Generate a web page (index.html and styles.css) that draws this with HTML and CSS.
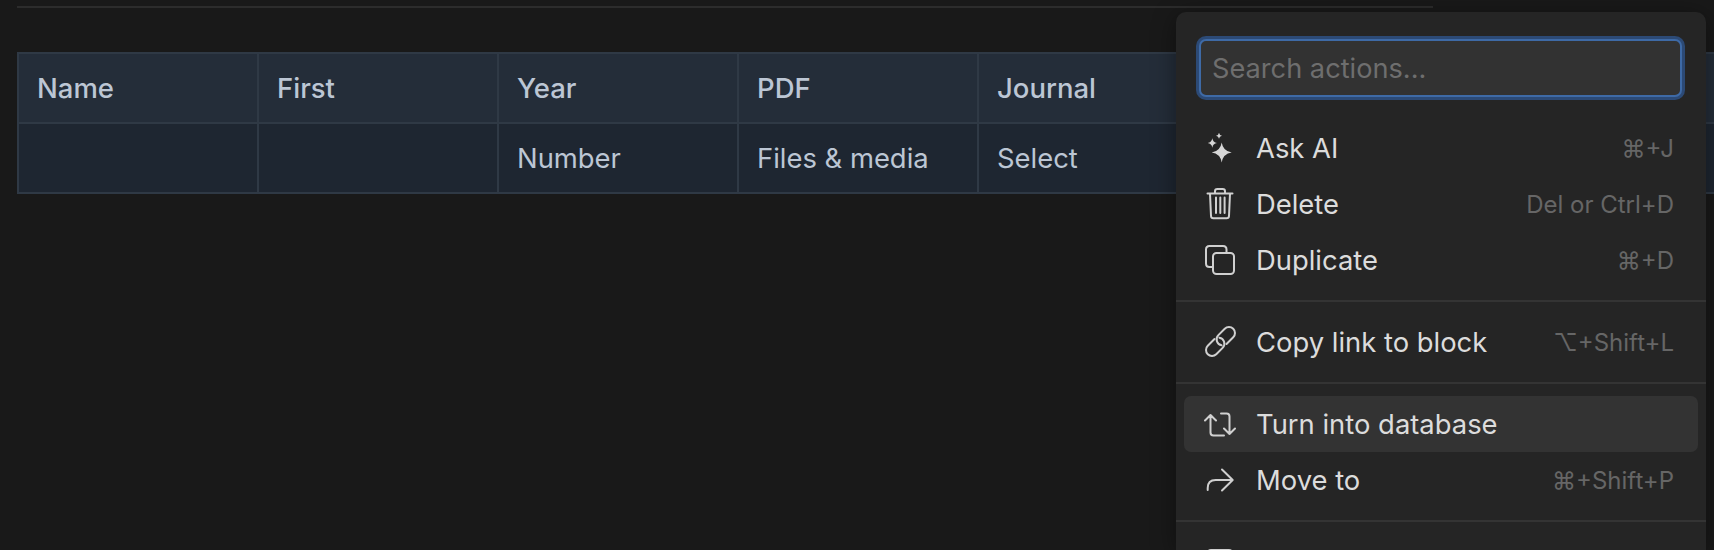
FILE: index.html
```html
<!DOCTYPE html>
<html lang="en">
<head>
<meta charset="utf-8">
<title>Table with block menu</title>
<link rel="stylesheet" href="styles.css">
</head>
<body>
<main class="page">
  <div class="rule"></div>
  <table class="db">
    <tr class="head"><th>Name</th><th>First</th><th>Year</th><th>PDF</th><th>Journal</th><th></th><th></th><th class="edge"></th></tr>
    <tr><td></td><td></td><td>Number</td><td>Files &amp; media</td><td>Select</td><td></td><td></td><td class="edge"></td></tr>
  </table>
</main>
<aside class="menu">
  <div class="search"><input class="search-input" placeholder="Search actions..."></div>
  <div class="group">
    <div class="item">
      <svg class="ico" viewBox="0 0 32 32"><path class="fill" d="M17.700 10.400Q19 19.100 27.700 20.400 19 21.700 17.700 30.400 16.400 21.700 7.700 20.400 16.400 19.100 17.700 10.400ZM8.300 6.300Q8.900 10.400 13 11 8.900 11.600 8.300 15.700 7.700 11.600 3.600 11 7.700 10.400 8.300 6.300ZM15 .7Q15.400 3.300 18 3.700 15.400 4.100 15 6.700 14.600 4.100 12 3.700 14.600 3.300 15 .7Z"/></svg>
      <span class="label">Ask AI</span><span class="keys">⌘+J</span>
    </div>
    <div class="item">
      <svg class="ico" viewBox="0 0 32 32"><path d="M3.500 5.500h25M11 5.500V3.300C11 1.800 12 1 13.400 1h5.200C20 1 21 1.800 21 3.300v2.200M6 5.500l1 22.500c.1 1.500 1 2.300 2.400 2.300h13.200c1.400 0 2.300-.8 2.400-2.300l1-22.500M12 9.500v15.500M16.300 9.500v15.500M20.600 9.500v15.500"/></svg>
      <span class="label">Delete</span><span class="keys">Del or Ctrl+D</span>
    </div>
    <div class="item">
      <svg class="ico" viewBox="0 0 32 32"><path d="M8 23H5.500C3 23 2 22 2 19.500v-14C2 3 3 2 5.500 2h13.500c2.500 0 3.500 1 3.500 3.500V9"/><rect x="9" y="9" width="21" height="21" rx="3.500"/></svg>
      <span class="label">Duplicate</span><span class="keys">⌘+D</span>
    </div>
  </div>
  <div class="group">
    <div class="item">
      <svg class="ico" viewBox="0 0 32 32"><g transform="translate(16.500 15.500) rotate(-45)"><path d="M2.500 6H12a6 6 0 0 0 0-12H3A6 6 0 0 0-1.910 3.440"/><path d="M-2.500-6H-12a6 6 0 0 0 0 12H-3A6 6 0 0 0 1.910-3.440"/></g></svg>
      <span class="label">Copy link to block</span><span class="keys">⌥+Shift+L</span>
    </div>
  </div>
  <div class="group">
    <div class="item active">
      <svg class="ico" viewBox="0 0 32 32"><path d="M1 12.500 6.500 7l5.500 5.500M6.500 7v17.500c0 2 1 3 3 3H20M31 20.500 25.500 26 20 20.500M25.500 26V8.500c0-2-1-3-3-3H17"/></svg>
      <span class="label">Turn into database</span>
    </div>
    <div class="item">
      <svg class="ico" viewBox="0 0 32 32"><path d="M3.700 26v-2c0-5 3-8 8-8H28.500M18 5.500 28.700 16 18 26.500"/></svg>
      <span class="label">Move to</span><span class="keys">⌘+Shift+P</span>
    </div>
  </div>
  <div class="group">
    <div class="item">
      <svg class="ico" viewBox="0 0 32 32"><rect x="3" y="4" width="26" height="24" rx="4"/></svg>
      <span class="label"></span>
    </div>
  </div>
</aside>
</body>
</html>
```

FILE: styles.css
```css
* { box-sizing: border-box; }
html, body { margin: 0; height: 100%; }
body {
  background: #191919;
  font-family: Inter, "Liberation Sans", sans-serif;
  overflow: hidden;
  position: relative;
}
.page { padding: 6px 0 0 17px; }
.rule { width: 1416px; height: 2px; background: #2c2c2c; }
.db {
  margin-top: 44px;
  border-collapse: collapse;
  table-layout: fixed;
  width: 1697px;
  color: #bcc6d4;
  font-size: 27.4px;
  text-align: left;
  background: #1e2631;
}
.db th, .db td {
  width: 240px;
  height: 70px;
  padding: 0 18px;
  border: 2px solid #2f3945;
  font-weight: 400;
}
.db .edge { width: 17px; padding: 0; border-right: 0; }
.db th { background: #242d39; font-weight: 500; font-size: 27.5px; }
.menu {
  position: absolute;
  left: 1176px;
  top: 12px;
  bottom: 0;
  width: 530px;
  background: #252525;
  border-radius: 10px 10px 0 0;
  box-shadow: 0 4px 24px rgba(0,0,0,.4);
  overflow: hidden;
}
.search { padding: 27px 24px 23px 23px; }
.search-input {
  display: block;
  width: 100%;
  height: 58px;
  padding: 0 11px;
  background: #323232;
  border: 2px solid #3e6aa6;
  border-radius: 7px;
  box-shadow: 0 0 0 3px #2c4a76;
  color: #e0e0e0;
  font: 400 27.2px Inter, sans-serif;
  outline: none;
}
.search-input::placeholder { color: #6e6e6e; opacity: 1; }
.group { padding: 0 8px 12px; border-bottom: 2px solid #343434; margin-bottom: 12px; }
.group:last-child { border-bottom: 0; }
.item {
  display: flex;
  align-items: center;
  height: 56px;
  padding: 0 24px 0 20px;
  border-radius: 7px;
  color: #dcdcdc;
  font-size: 27.4px;
}
.item.active { background: #333; }
.ico {
  width: 32px;
  height: 32px;
  margin-right: 20px;
  flex: none;
  fill: none;
  stroke: #d0d0d0;
  stroke-width: 2;
  stroke-linecap: round;
  stroke-linejoin: round;
}
.ico .fill { fill: #d6d6d6; stroke: none; }
.label { flex: 1; }
.keys { color: #666; font-size: 24px; }
```
